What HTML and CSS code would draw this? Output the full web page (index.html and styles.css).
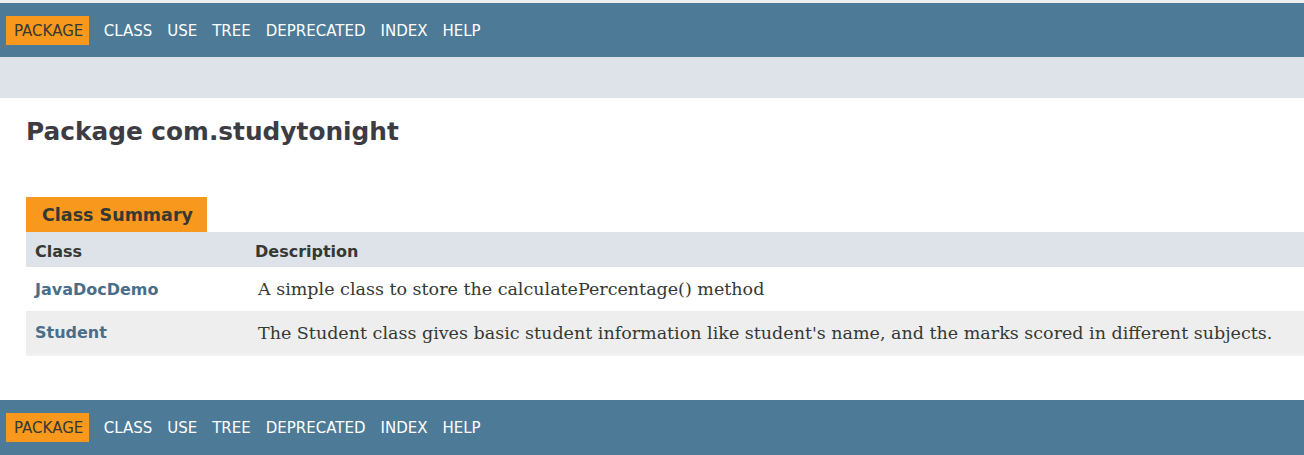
FILE: index.html
```html
<!DOCTYPE html>
<html>
<head>
<meta charset="utf-8">
<link rel="stylesheet" href="styles.css">
</head>
<body>
<div class="topline"></div>
<nav class="topnav">
  <ul class="navlist">
    <li class="current">Package</li>
    <li>Class</li>
    <li>Use</li>
    <li>Tree</li>
    <li>Deprecated</li>
    <li>Index</li>
    <li>Help</li>
  </ul>
</nav>
<div class="subnav"></div>
<div class="header">
  <h1 class="title">Package com.studytonight</h1>
</div>
<div class="content">
  <div class="caption"><span>Class Summary</span></div>
  <table class="summary">
    <thead>
      <tr><th class="colfirst">Class</th><th class="collast">Description</th></tr>
    </thead>
    <tbody>
      <tr class="alt"><td class="colfirst"><a>JavaDocDemo</a></td><td class="collast">A simple class to store the calculatePercentage() method</td></tr>
      <tr class="row"><td class="colfirst"><a>Student</a></td><td class="collast">The Student class gives basic student information like student's name, and the marks scored in different subjects.</td></tr>
    </tbody>
  </table>
</div>
<nav class="topnav bottomnav">
  <ul class="navlist">
    <li class="current">Package</li>
    <li>Class</li>
    <li>Use</li>
    <li>Tree</li>
    <li>Deprecated</li>
    <li>Index</li>
    <li>Help</li>
  </ul>
</nav>
</body>
</html>
```
FILE: styles.css
```css
html, body {
  margin: 0;
  padding: 0;
  background: #ffffff;
  overflow: hidden;
}
body {
  font-family: "DejaVu Sans", Arial, sans-serif;
  color: #353833;
  width: 1304px;
}
.topline {
  height: 3px;
  background: #eeeeee;
}
.topnav {
  background: #4D7A97;
  height: 54px;
  display: flex;
  align-items: center;
}
.navlist {
  list-style: none;
  margin: 0;
  padding: 0 0 0 6px;
  display: flex;
  align-items: center;
}
.navlist li {
  color: #ffffff;
  text-transform: uppercase;
  font-size: 15px;
  padding: 0 7.5px;
  height: 29px;
  line-height: 31px;
}
.navlist li.current {
  background: #F8981D;
  color: #353833;
  padding: 0 6px 0 8px;
  margin-right: 7px;
}
.subnav {
  background: #dee3e9;
  height: 41px;
}
.header {
  padding: 18px 26px 0;
  height: 81px;
}
.title {
  margin: 0;
  font-size: 24.8px;
  font-weight: bold;
  color: #3d3c43;
  line-height: 31px;
}
.content {
  padding: 0 0 0 26px;
  height: 203px;
}
.caption {
  display: flex;
}
.caption span {
  background: #F8981D;
  color: #353833;
  font-weight: bold;
  font-size: 17.5px;
  height: 35px;
  line-height: 36px;
  padding: 0 14px 0 16px;
}
.summary {
  border-collapse: collapse;
  table-layout: fixed;
  width: 1300px;
  border-bottom: 2px solid #f2f2f2;
}
.summary th {
  background: #dee3e9;
  text-align: left;
  font-size: 16px;
  font-weight: bold;
  height: 35px;
  padding: 4px 0 0;
  box-sizing: border-box;
  vertical-align: middle;
}
.summary th.colfirst {
  padding-left: 9px;
  width: 229px;
}
.summary td {
  padding: 0;
  vertical-align: middle;
}
.summary td.colfirst {
  padding-left: 9px;
}
.summary td.colfirst a {
  color: #4A6E8A;
  font-weight: bold;
  font-size: 16px;
}
.summary td.collast {
  font-family: "DejaVu Serif", Georgia, serif;
  font-size: 17.5px;
  padding-left: 3px;
  white-space: nowrap;
}
.summary tr.alt td {
  background: #ffffff;
  height: 44px;
}
.summary tr.row td {
  background: #eeeeef;
  height: 43px;
}
.bottomnav {
  height: 55px;
}
```
